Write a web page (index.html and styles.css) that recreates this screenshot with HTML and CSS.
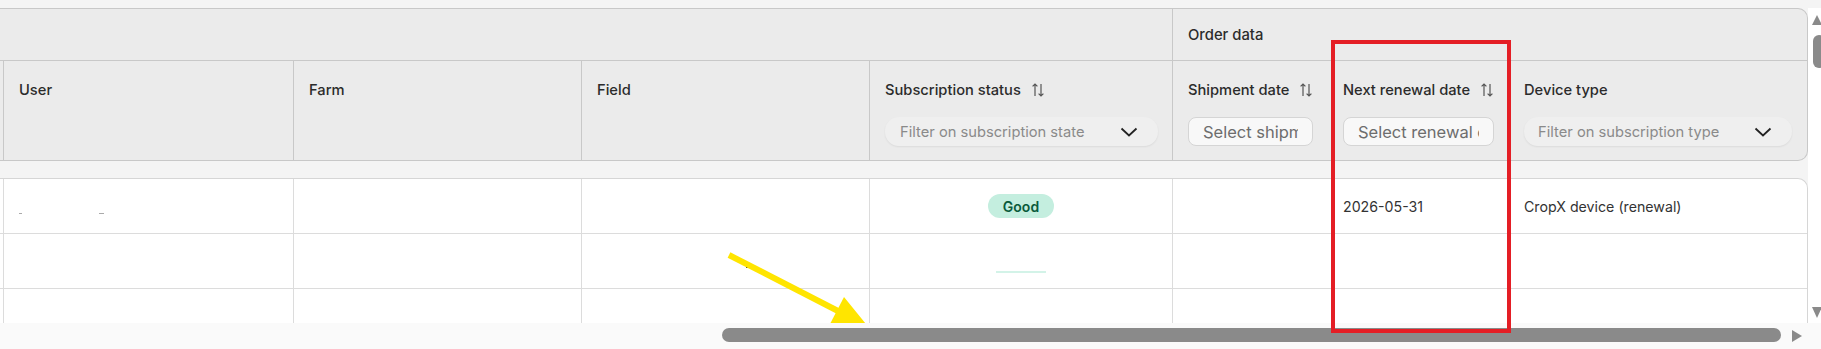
FILE: index.html
```html
<!DOCTYPE html>
<html>
<head>
    <title>Subscriptions</title>
    <link rel="stylesheet" href="styles.css">
</head>
<body>

<div class="screen">
    <div class="pane">
        <div class="table-head">
            <div class="group-row">
                <div class="group"></div>
                <div class="group group-order">Order data</div>
            </div>
            <div class="col-row">
                <div class="th stub"></div>
                <div class="th"><div class="th-label">User</div></div>
                <div class="th"><div class="th-label">Farm</div></div>
                <div class="th"><div class="th-label">Field</div></div>
                <div class="th">
                    <div class="th-label">Subscription status
                        <svg class="sort" width="12" height="14" viewBox="0 0 12 14"><path d="M3 13V1M0.6 3.4L3 1l2.4 2.4M9 1v12M6.6 10.6L9 13l2.4-2.4"/></svg>
                    </div>
                    <div class="filter"><span>Filter on subscription state</span>
                        <svg class="chevron" width="18" height="10" viewBox="0 0 18 10"><path d="M1.5 1.5L9 8.5l7.5-7"/></svg>
                    </div>
                </div>
                <div class="th">
                    <div class="th-label">Shipment date
                        <svg class="sort" width="12" height="14" viewBox="0 0 12 14"><path d="M3 13V1M0.6 3.4L3 1l2.4 2.4M9 1v12M6.6 10.6L9 13l2.4-2.4"/></svg>
                    </div>
                    <input class="date" type="text" placeholder="Select shipment date">
                </div>
                <div class="th no-line">
                    <div class="th-label">Next renewal date
                        <svg class="sort" width="12" height="14" viewBox="0 0 12 14"><path d="M3 13V1M0.6 3.4L3 1l2.4 2.4M9 1v12M6.6 10.6L9 13l2.4-2.4"/></svg>
                    </div>
                    <input class="date" type="text" placeholder="Select renewal date">
                </div>
                <div class="th no-line last">
                    <div class="th-label">Device type</div>
                    <div class="filter filter-device"><span>Filter on subscription type</span>
                        <svg class="chevron" width="18" height="10" viewBox="0 0 18 10"><path d="M1.5 1.5L9 8.5l7.5-7"/></svg>
                    </div>
                </div>
            </div>
        </div>

        <div class="table-body">
            <div class="tr">
                <div class="td stub"></div>
                <div class="td"><span class="trace"><i></i><i class="wide"></i></span></div>
                <div class="td"></div>
                <div class="td"></div>
                <div class="td center"><span class="badge">Good</span></div>
                <div class="td"></div>
                <div class="td no-line">2026-05-31</div>
                <div class="td no-line">CropX device (renewal)</div>
            </div>
            <div class="tr">
                <div class="td stub"></div>
                <div class="td"></div>
                <div class="td"></div>
                <div class="td"><span class="dash"></span></div>
                <div class="td center"><span class="badge-edge"></span></div>
                <div class="td"></div>
                <div class="td no-line"></div>
                <div class="td no-line"></div>
            </div>
            <div class="tr">
                <div class="td stub"></div>
                <div class="td"></div>
                <div class="td"></div>
                <div class="td"></div>
                <div class="td"></div>
                <div class="td"></div>
                <div class="td no-line"></div>
                <div class="td no-line"></div>
            </div>
        </div>

        <svg class="arrow" width="1808" height="323" viewBox="0 0 1808 323">
            <line x1="729" y1="255" x2="838" y2="311" stroke="#ffe500" stroke-width="6"/>
            <polygon points="844,297 830,324 868,326.5" fill="#ffe500"/>
        </svg>
    </div>

    <div class="vscroll">
        <div class="v-up"></div>
        <div class="v-thumb"></div>
        <div class="v-down"></div>
    </div>
    <div class="hscroll">
        <div class="h-thumb"></div>
        <div class="h-right"></div>
    </div>
    <div class="corner"></div>

    <div class="highlight"></div>
</div>

</body>
</html>
```

FILE: styles.css
```css
body {
    margin: 0; overflow: hidden; font-family: 'Inter', 'Noto Sans', sans-serif; background-color: #f4f4f4; color: #2b2b2b;
}

.screen {
    position: relative; display: grid; grid-template-columns: 1808px 13px; grid-template-rows: 323px 26px; width: 1821px; height: 349px;
}

.pane { position: relative; overflow: hidden; padding-top: 8px; box-sizing: border-box;
}

/* header */
.table-head { width: 1808px; box-sizing: border-box; border: 1px solid #c8c8c8; border-left: none; border-radius: 0 10px 10px 0; background-color: #ebebeb;
}

.group-row { display: grid; grid-template-columns: 1172px 1fr; height: 52px; box-sizing: border-box; border-bottom: 1px solid #c8c8c8;
}

.group-order { display: flex; align-items: center; border-left: 1px solid #c8c8c8; padding-left: 15px; font-size: 14.8px; font-weight: 500;
}

.col-row, .tr { display: grid; grid-template-columns: 3px 290px 288px 288px 303px 155px 181px 299px;
}

.col-row { height: 99px;
}

.th { border-left: 1px solid #c8c8c8; padding: 19px 14px 0 15px; box-sizing: border-box; min-width: 0;
}

.th.stub, .td.stub { border-left: none; padding: 0;
}

.th.no-line { border-left-color: transparent;
}

.th.last { padding-right: 15px;
}

.th-label { display: flex; align-items: center; gap: 11px; height: 20px; font-size: 14.7px; font-weight: 500; white-space: nowrap;
}

.sort { fill: none; stroke: #555; stroke-width: 1.2;
}

.filter { display: flex; justify-content: space-between; align-items: center; height: 29px; margin-top: 17px; padding: 0 20px 0 15px; border-radius: 14px; background-color: #efefef; box-shadow: 0 1px 2px rgba(0, 0, 0, 0.07); font-size: 14.7px; color: #8a8a8a; white-space: nowrap;
}

.filter-device { padding-left: 14px;
}

.chevron { fill: none; stroke: #222; stroke-width: 1.8;
}

.date { display: block; width: 100%; height: 29px; margin: 17px 0 0 0; padding: 0 14px; box-sizing: border-box; border: 1px solid #d5d5d5; border-radius: 8px; background-color: #f8f8f8; font-family: 'Inter', sans-serif; font-size: 16.5px; outline: none;
}

.date::placeholder { color: #6d6d6d;
}

/* body */
.table-body { width: 1808px; margin-top: 17px; box-sizing: border-box; border-top: 1px solid #d6d6d6; border-right: 1px solid #d6d6d6; border-radius: 0 10px 0 0; background-color: #fff;
}

.tr { height: 55px; box-sizing: border-box; border-bottom: 1px solid #dcdcdc;
}

.td { display: flex; align-items: center; border-left: 1px solid #dcdcdc; padding: 0 15px; font-size: 14.2px; color: #333; white-space: nowrap; min-width: 0;
}

.td.no-line { border-left-color: transparent;
}

.td.center { justify-content: center;
}

.badge { display: inline-flex; align-items: center; height: 24px; padding: 0 15px; border-radius: 12px; background-color: #c4eedf; color: #0b5b3c; font-size: 14px; font-weight: 600;
}

.badge-edge { width: 50px; height: 2px; margin-top: 22px; background-color: #d3f3e8;
}

.trace { display: flex; gap: 77px; margin-top: 14px;
}

.trace i { width: 3px; height: 1px; background-color: #aaa;
}

.trace i.wide { width: 5px;
}

.dash { width: 3px; height: 1px; margin: 12px 0 0 149px; background-color: #222;
}

/* annotations */
.arrow { position: absolute; left: 0; top: 0;
}

.highlight { position: absolute; left: 1331px; top: 40px; width: 180px; height: 293px; box-sizing: border-box; border: 4px solid #e41e25;
}

/* scrollbars */
.vscroll { display: flex; flex-direction: column; margin-top: 8px; padding: 7px 0 5px 0; background-color: #fff;
}

.v-up { width: 0; height: 0; margin-left: 4px; border-left: 5px solid transparent; border-right: 5px solid transparent; border-bottom: 10px solid #8a8a8a;
}

.v-thumb { width: 12px; height: 33px; margin: 10px 0 0 5px; border-radius: 6px; background-color: #8a8a8a;
}

.v-down { width: 0; height: 0; margin: auto 0 0 4px; border-left: 5px solid transparent; border-right: 5px solid transparent; border-top: 11px solid #8a8a8a;
}

.hscroll { display: flex; align-items: flex-start; padding-top: 5px; box-sizing: border-box; background-color: #fafafa;
}

.h-thumb { width: 1059px; height: 14px; margin-left: 722px; border-radius: 7px; background-color: #8a8a8a;
}

.h-right { width: 0; height: 0; margin: 2px 0 0 11px; border-top: 6.5px solid transparent; border-bottom: 6.5px solid transparent; border-left: 10px solid #8a8a8a;
}

.corner { background-color: #fafafa;
}
```
